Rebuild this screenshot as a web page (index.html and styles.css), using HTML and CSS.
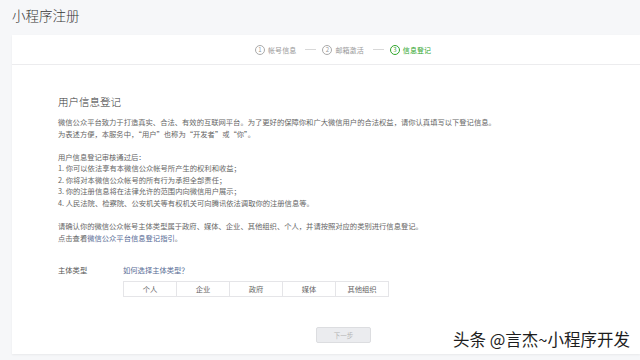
FILE: index.html
```html
<!DOCTYPE html>
<html lang="zh-CN">
<head>
<meta charset="utf-8">
<title>小程序注册</title>
<link rel="stylesheet" href="styles.css">
</head>
<body>
<div class="page-title">小程序注册</div>
<div class="card">
  <div class="steps">
    <div class="step"><span class="num">1</span><span class="label">帐号信息</span></div>
    <span class="sep"></span>
    <div class="step"><span class="num">2</span><span class="label">邮箱激活</span></div>
    <span class="sep"></span>
    <div class="step active"><span class="num">3</span><span class="label">信息登记</span></div>
  </div>
  <div class="content">
    <h2 class="title">用户信息登记</h2>
    <p class="txt">微信公众平台致力于打造真实、合法、有效的互联网平台。为了更好的保障你和广大微信用户的合法权益，请你认真填写以下登记信息。<br>为表述方便，本服务中，“用户”也称为“开发者”或“你”。</p>
    <p class="txt">用户信息登记审核通过后：<br>1. 你可以依法享有本微信公众帐号所产生的权利和收益；<br>2. 你将对本微信公众帐号的所有行为承担全部责任；<br>3. 你的注册信息将在法律允许的范围内向微信用户展示；<br>4. 人民法院、检察院、公安机关等有权机关可向腾讯依法调取你的注册信息等。</p>
    <p class="txt">请确认你的微信公众帐号主体类型属于政府、媒体、企业、其他组织、个人，并请按照对应的类别进行信息登记。<br>点击查看<a class="link">微信公众平台信息登记指引</a>。</p>
    <div class="row">
      <div class="row-label">主体类型</div>
      <div class="row-body">
        <a class="link">如何选择主体类型？</a>
        <div class="types">
          <div class="type">个人</div>
          <div class="type">企业</div>
          <div class="type">政府</div>
          <div class="type">媒体</div>
          <div class="type">其他组织</div>
        </div>
      </div>
    </div>
    <div class="actions"><button class="btn" disabled>下一步</button></div>
  </div>
</div>
<div class="watermark">头条 @言杰~小程序开发</div>
</body>
</html>
```

FILE: styles.css
```css
html, body {
  margin: 0;
  padding: 0;
  height: 100%;
}
body {
  background: #f6f7f9;
  font-family: "Noto Sans CJK SC", "Noto Sans", sans-serif;
  color: #555;
  position: relative;
  overflow: hidden;
}
.page-title {
  height: 35px;
  box-sizing: border-box;
  padding: 6px 0 0 12px;
  font-size: 13.5px;
  line-height: 18px;
  color: #353535;
  font-weight: 300;
}
.card {
  margin-left: 12px;
  background: #fff;
  height: 319px;
  box-shadow: 0 1px 2px rgba(0,0,0,0.06);
}
.steps {
  height: 29px;
  border-bottom: 1px solid #ececee;
  display: flex;
  align-items: center;
  padding-left: 243px;
  font-size: 7px;
  color: #999;
}
.step {
  display: flex;
  align-items: center;
  gap: 3px;
}
.num {
  width: 8px;
  height: 8px;
  border: 1px solid #aaa;
  border-radius: 50%;
  font-size: 6px;
  line-height: 8px;
  text-align: center;
}
.label {
  letter-spacing: 0.1px;
}
.sep {
  width: 11px;
  height: 1px;
  background: #d8d8d8;
  margin: 0 6px 0 9px;
}
.step.active {
  color: #2fa52b;
}
.step.active .num {
  border-color: #2fa52b;
}
.content {
  padding: 30px 0 0 46px;
}
.title {
  margin: 0;
  font-size: 10.5px;
  line-height: 14px;
  font-weight: 300;
  color: #353535;
}
.txt {
  margin: 8px 0 11.5px;
  font-size: 7.3px;
  line-height: 11.6px;
  color: #666;
}
.txt + .txt {
  margin-top: 0;
}
.link {
  color: #576b95;
  text-decoration: none;
}
.row {
  display: flex;
  margin-top: 20px;
  font-size: 7.3px;
  line-height: 12px;
}
.row-label {
  width: 65px;
  color: #555;
}
.row-body {
  display: flex;
  flex-direction: column;
}
.types {
  display: flex;
  margin-top: 5px;
  border: 1px solid #e5e5e8;
}
.type {
  width: 52px;
  height: 14px;
  line-height: 14px;
  text-align: center;
  color: #666;
  border-left: 1px solid #e5e5e8;
}
.type:first-child {
  border-left: none;
}
.actions {
  margin: 22px 0 0 258px;
}
.btn {
  width: 55px;
  height: 16px;
  padding: 0;
  border: 1px solid #dcdde0;
  border-radius: 2px;
  background: #ebecef;
  color: #b5b5b5;
  font-family: "Noto Sans CJK SC", sans-serif;
  font-size: 6.5px;
}
.watermark {
  position: absolute;
  left: 453px;
  top: 329px;
  font-size: 16.5px;
  line-height: 20px;
  color: #1d1d1d;
  font-family: "Noto Sans CJK SC", sans-serif;
  text-shadow: 0 0 2px #fff, 0 0 2px #fff;
}
```
